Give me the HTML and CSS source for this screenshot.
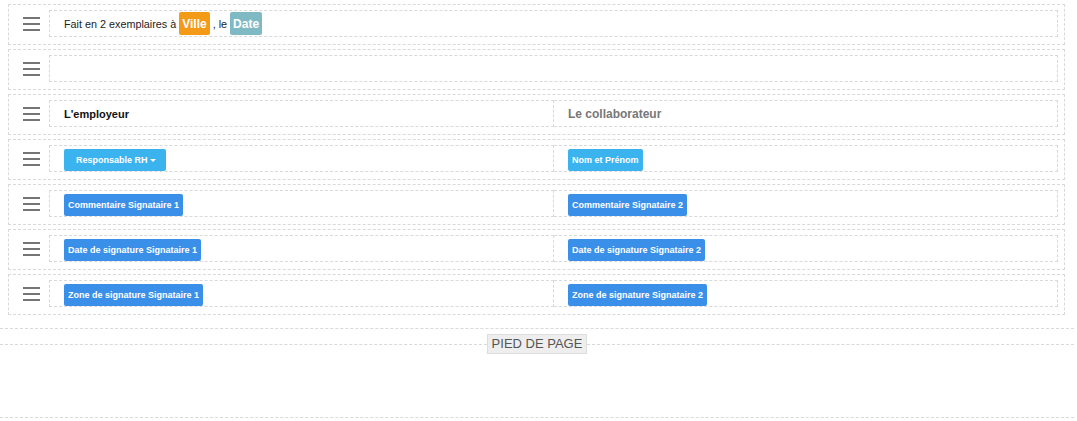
FILE: index.html
```html
<!DOCTYPE html>
<html lang="fr">
<head>
<meta charset="utf-8">
<title>Signatures</title>
<link rel="stylesheet" href="styles.css">
</head>
<body>
<div class="rows">
  <div class="row">
    <div class="handle"><svg class="bars" width="17" height="14" viewBox="0 0 17 14"><rect x="0" y="0" width="17" height="2"/><rect x="0" y="6" width="17" height="2"/><rect x="0" y="12" width="17" height="2"/></svg></div>
    <div class="cells">
      <div class="cell text-cell intro">Fait en 2 exemplaires à <span class="badge badge-orange">Ville</span> , le <span class="badge badge-teal">Date</span></div>
    </div>
  </div>
  <div class="row">
    <div class="handle"><svg class="bars" width="17" height="14" viewBox="0 0 17 14"><rect x="0" y="0" width="17" height="2"/><rect x="0" y="6" width="17" height="2"/><rect x="0" y="12" width="17" height="2"/></svg></div>
    <div class="cells">
      <div class="cell text-cell"></div>
    </div>
  </div>
  <div class="row">
    <div class="handle"><svg class="bars" width="17" height="14" viewBox="0 0 17 14"><rect x="0" y="0" width="17" height="2"/><rect x="0" y="6" width="17" height="2"/><rect x="0" y="12" width="17" height="2"/></svg></div>
    <div class="cells">
      <div class="cell text-cell"><strong class="label">L'employeur</strong></div>
      <div class="cell text-cell"><span class="label-muted">Le collaborateur</span></div>
    </div>
  </div>
  <div class="row">
    <div class="handle"><svg class="bars" width="17" height="14" viewBox="0 0 17 14"><rect x="0" y="0" width="17" height="2"/><rect x="0" y="6" width="17" height="2"/><rect x="0" y="12" width="17" height="2"/></svg></div>
    <div class="cells">
      <div class="cell btn-cell"><span class="btn btn-light btn-dropdown">Responsable RH<span class="caret"></span></span></div>
      <div class="cell btn-cell"><span class="btn btn-light">Nom et Prénom</span></div>
    </div>
  </div>
  <div class="row">
    <div class="handle"><svg class="bars" width="17" height="14" viewBox="0 0 17 14"><rect x="0" y="0" width="17" height="2"/><rect x="0" y="6" width="17" height="2"/><rect x="0" y="12" width="17" height="2"/></svg></div>
    <div class="cells">
      <div class="cell btn-cell"><span class="btn btn-blue">Commentaire Signataire 1</span></div>
      <div class="cell btn-cell"><span class="btn btn-blue">Commentaire Signataire 2</span></div>
    </div>
  </div>
  <div class="row">
    <div class="handle"><svg class="bars" width="17" height="14" viewBox="0 0 17 14"><rect x="0" y="0" width="17" height="2"/><rect x="0" y="6" width="17" height="2"/><rect x="0" y="12" width="17" height="2"/></svg></div>
    <div class="cells">
      <div class="cell btn-cell"><span class="btn btn-blue">Date de signature Signataire 1</span></div>
      <div class="cell btn-cell"><span class="btn btn-blue">Date de signature Signataire 2</span></div>
    </div>
  </div>
  <div class="row">
    <div class="handle"><svg class="bars" width="17" height="14" viewBox="0 0 17 14"><rect x="0" y="0" width="17" height="2"/><rect x="0" y="6" width="17" height="2"/><rect x="0" y="12" width="17" height="2"/></svg></div>
    <div class="cells">
      <div class="cell btn-cell"><span class="btn btn-blue">Zone de signature Signataire 1</span></div>
      <div class="cell btn-cell"><span class="btn btn-blue">Zone de signature Signataire 2</span></div>
    </div>
  </div>
</div>
<div class="footer">
  <div class="footer-title"><span class="footer-label">PIED DE PAGE</span></div>
</div>
</body>
</html>
```

FILE: styles.css
```css
html, body {
  margin: 0;
  padding: 0;
  background: #fff;
}
body {
  font-family: "Liberation Sans", Arial, sans-serif;
  font-size: 11px;
  color: #222;
}
.rows {
  margin: 4px 12px 0 8px;
  display: flex;
  flex-direction: column;
  gap: 4px;
}
.row {
  box-sizing: border-box;
  height: 41px;
  border: 1px dashed #d9d9d9;
  padding: 5px 6px 7px 0;
  display: flex;
}
.handle {
  width: 40px;
  flex: none;
  display: flex;
  align-items: center;
  padding-left: 14px;
  box-sizing: border-box;
}
.bars {
  fill: #757575;
  display: block;
}
.cells {
  flex: 1;
  display: flex;
  min-width: 0;
}
.cell {
  flex: 1 1 0;
  min-width: 0;
  box-sizing: border-box;
  border: 1px dashed #d9d9d9;
  padding: 0 14px;
  display: flex;
  white-space: pre;
}
.cell + .cell {
  border-left: none;
}
.text-cell {
  align-items: center;
}
.intro {
  font-size: 10.8px;
}
.btn-cell {
  align-items: flex-start;
  padding-top: 3px;
}
.badge {
  display: inline-flex;
  align-items: center;
  height: 23px;
  padding: 0 3px;
  border-radius: 2px;
  color: #fff;
  font-weight: bold;
  font-size: 12px;
}
.badge-orange {
  background: #f39a17;
}
.badge-teal {
  background: #7fbac4;
}
.label {
  font-weight: bold;
  color: #111;
}
.label-muted {
  font-weight: bold;
  font-size: 12px;
  color: #777;
}
.btn {
  display: inline-flex;
  align-items: center;
  height: 22px;
  padding: 0 4px;
  border-radius: 2px;
  color: #fff;
  font-weight: bold;
  font-size: 9px;
}
.btn-light {
  background: #3bb3ef;
}
.btn-blue {
  background: #3a8fe8;
}
.btn-dropdown {
  padding: 0 10px 0 12px;
}
.caret {
  display: inline-block;
  width: 0;
  height: 0;
  margin-left: 2px;
  border-left: 3px solid transparent;
  border-right: 3px solid transparent;
  border-top: 3px solid #fff;
}
.footer {
  margin: 13px 3px 0 0;
  box-sizing: border-box;
  height: 90px;
  border-top: 1px dashed #d9d9d9;
  border-bottom: 1px dashed #d9d9d9;
  padding-top: 5px;
}
.footer-title {
  display: flex;
  align-items: center;
}
.footer-title::before,
.footer-title::after {
  content: "";
  flex: 1;
  border-top: 1px dashed #d9d9d9;
}
.footer-label {
  background: #eee;
  border: 1px solid #ddd;
  color: #555;
  font-size: 13px;
  line-height: 16px;
  padding: 1px 4px;
}
```
